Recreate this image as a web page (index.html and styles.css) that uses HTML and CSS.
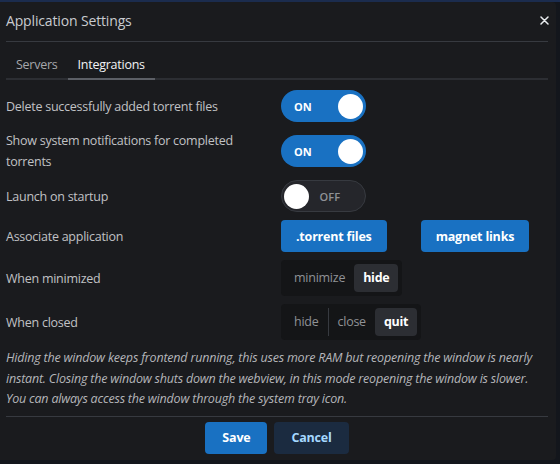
FILE: index.html
```html
<!DOCTYPE html>
<html lang="en">
<head>
    <meta charset="UTF-8">
    <meta name="viewport" content="width=device-width, initial-scale=1.0">
    <title>Application Settings</title>
    <link rel="stylesheet" href="styles.css">
</head>
<body>
    <div class="modal">
        <div class="modal-header">
            <h2 class="modal-title">Application Settings</h2>
            <button class="close-btn" aria-label="Close">
                <svg width="9" height="9" viewBox="0 0 9 9">
                    <path d="M1 1L8 8M8 1L1 8" stroke="#e9ecef" stroke-width="1.5" stroke-linecap="round"/>
                </svg>
            </button>
        </div>

        <div class="tabs">
            <button class="tab">Servers</button>
            <button class="tab active">Integrations</button>
        </div>

        <div class="settings">
            <div class="label">Delete successfully added torrent files</div>
            <div class="control">
                <span class="switch on"><span class="switch-text">ON</span><span class="knob"></span></span>
            </div>

            <div class="label">Show system notifications for completed torrents</div>
            <div class="control">
                <span class="switch on"><span class="switch-text">ON</span><span class="knob"></span></span>
            </div>

            <div class="label">Launch on startup</div>
            <div class="control">
                <span class="switch off"><span class="knob"></span><span class="switch-text">OFF</span></span>
            </div>

            <div class="label">Associate application</div>
            <div class="control button-row">
                <button class="btn primary">.torrent files</button>
                <button class="btn primary">magnet links</button>
            </div>

            <div class="label">When minimized</div>
            <div class="control">
                <div class="segmented">
                    <span class="segment">minimize</span>
                    <span class="segment active">hide</span>
                </div>
            </div>

            <div class="label">When closed</div>
            <div class="control">
                <div class="segmented">
                    <span class="segment">hide</span>
                    <span class="segment sep">close</span>
                    <span class="segment active">quit</span>
                </div>
            </div>
        </div>

        <p class="note">Hiding the window keeps frontend running, this uses more RAM but reopening the window is nearly instant. Closing the window shuts down the webview, in this mode reopening the window is slower. You can always access the window through the system tray icon.</p>

        <div class="footer">
            <button class="btn primary">Save</button>
            <button class="btn light">Cancel</button>
        </div>
    </div>
</body>
</html>
```

FILE: styles.css
```css
* {
    margin: 0;
    padding: 0;
    box-sizing: border-box;
}

body {
    font-family: "Open Sans", "Noto Sans", sans-serif;
    font-size: 12.5px;
    letter-spacing: -0.25px;
    background: linear-gradient(#1b2c4e 0, #1b2c4e 2px, #13161c 2px);
    color: #c1c2c5;
    width: 560px;
    height: 464px;
    padding-top: 2px;
    overflow: hidden;
}

.modal {
    width: 556px;
    height: 458px;
    background-color: #1a1b1e;
    border-radius: 0 4px 4px 0;
    padding: 0 8px 0 6px;
}

.modal-header {
    height: 40px;
    display: flex;
    align-items: center;
    justify-content: space-between;
    border-bottom: 1px solid #373a40;
    padding-bottom: 3px;
}

.modal-title {
    font-size: 14px;
    letter-spacing: -0.15px;
    font-weight: normal;
    color: #c9cbd0;
}

.close-btn {
    background: none;
    border: none;
    width: 16px;
    height: 16px;
    display: flex;
    align-items: center;
    justify-content: center;
    margin-right: -4px;
}

/* Tabs */
.tabs {
    display: flex;
    padding-top: 8px;
    border-bottom: 2px solid #2c2e33;
}

.tab {
    background: none;
    border: none;
    font-family: inherit;
    font-size: inherit;
    letter-spacing: inherit;
    color: #a6a7ab;
    height: 30px;
    padding: 0 10px;
    border-bottom: 2px solid transparent;
    margin-bottom: -2px;
}

.tab.active {
    color: #f1f3f5;
    border-bottom-color: #5c5f66;
}

/* Settings rows */
.settings {
    display: grid;
    grid-template-columns: 275px 1fr;
    align-items: center;
    margin-top: 6px;
}

.label,
.control {
    padding: 4px 0;
    line-height: 21px;
}

.label {
    padding-right: 8px;
}

.control {
    display: flex;
    align-items: center;
}

.switch {
    width: 85px;
    height: 32px;
    border-radius: 16px;
    display: flex;
    align-items: center;
    justify-content: space-between;
    font-size: 11px;
    letter-spacing: 0;
    font-weight: bold;
}

.switch.on {
    background-color: #1971c2;
    color: #fff;
    padding: 0 3px 0 13px;
}

.switch.off {
    background-color: #25262b;
    border: 1px solid #373a40;
    color: #909296;
    padding: 0 25px 0 2px;
    font-weight: 600;
}

.knob {
    width: 25px;
    height: 25px;
    border-radius: 50%;
    background-color: #fff;
}

.button-row {
    gap: 34px;
}

.btn {
    height: 32px;
    padding: 0 15px;
    border: none;
    border-radius: 4px;
    font-family: inherit;
    font-size: 12.5px;
    letter-spacing: -0.2px;
    font-weight: bold;
    white-space: nowrap;
    flex-shrink: 0;
    cursor: pointer;
}

.btn.primary {
    background-color: #1971c2;
    color: #fff;
}

.btn.light {
    background-color: #1b2b40;
    color: #a5d8ff;
}

.footer .btn {
    padding: 0 17px;
}

.segmented {
    display: inline-flex;
    background-color: #141517;
    border-radius: 4px;
    padding: 4px;
}

.segment {
    height: 28px;
    line-height: 28px;
    padding: 0 9px;
    color: #909296;
    border-radius: 4px;
}

.segment.sep {
    border-left: 1px solid #373a40;
    border-radius: 0;
}

.segment.active {
    background-color: #2c2e33;
    color: #fff;
    font-weight: bold;
}

/* Footer */
.note {
    font-style: italic;
    font-size: 12.5px;
    letter-spacing: -0.2px;
    line-height: 20.5px;
    color: #b5b6ba;
    margin-top: 4px;
    padding-bottom: 6px;
    border-bottom: 1px solid #373a40;
}

.footer {
    display: flex;
    justify-content: center;
    gap: 7px;
    padding-top: 5px;
}
```
